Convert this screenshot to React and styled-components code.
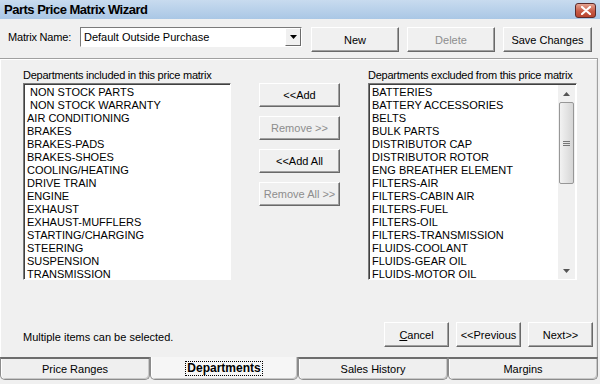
import React from 'react';
import styled, { createGlobalStyle } from 'styled-components';

const GlobalStyle = createGlobalStyle`
  html, body { margin: 0; padding: 0; background: #f0f0f0; }
  body { font-family: "Liberation Sans", Arial, sans-serif; font-size: 11px; color: #000; }
`;

const included = [
  ' NON STOCK PARTS', ' NON STOCK WARRANTY', 'AIR CONDITIONING', 'BRAKES', 'BRAKES-PADS',
  'BRAKES-SHOES', 'COOLING/HEATING', 'DRIVE TRAIN', 'ENGINE', 'EXHAUST', 'EXHAUST-MUFFLERS',
  'STARTING/CHARGING', 'STEERING', 'SUSPENSION', 'TRANSMISSION',
];

const excluded = [
  'BATTERIES', 'BATTERY ACCESSORIES', 'BELTS', 'BULK PARTS', 'DISTRIBUTOR CAP',
  'DISTRIBUTOR ROTOR', 'ENG BREATHER ELEMENT', 'FILTERS-AIR', 'FILTERS-CABIN AIR',
  'FILTERS-FUEL', 'FILTERS-OIL', 'FILTERS-TRANSMISSION', 'FLUIDS-COOLANT',
  'FLUIDS-GEAR OIL', 'FLUIDS-MOTOR OIL',
];

const tabs = ['Price Ranges', 'Departments', 'Sales History', 'Margins'];

const Window = styled.div`
  width: 600px;
  height: 384px;
  display: flex;
  flex-direction: column;
  background: #f0f0f0;
  overflow: hidden;
`;

const TitleBar = styled.div`
  height: 19px;
  flex: none;
  display: flex;
  align-items: center;
  justify-content: space-between;
  padding: 0 4px 0 4px;
  background: linear-gradient(#c8dbef, #aac7e5);
  font-size: 13px;
  letter-spacing: -0.5px;
  font-weight: bold;
`;

const CloseButton = styled.div`
  width: 19px;
  height: 13px;
  margin-top: 1px;
  border: 1px solid #5b2a2a;
  border-radius: 3px;
  background: linear-gradient(#e4a493, #c85a45 55%, #b8452f);
  display: flex;
  align-items: center;
  justify-content: center;
`;

const Toolbar = styled.div`
  height: 39px;
  flex: none;
  display: flex;
  align-items: flex-start;
  padding: 8px 0 0 8px;
  box-sizing: border-box;
`;

const Label = styled.span`
  width: 72px;
  flex: none;
  line-height: 20px;
  letter-spacing: -0.2px;
`;

const Select = styled.div`
  width: 222px;
  height: 20px;
  box-sizing: border-box;
  border: 1px solid;
  border-color: #7a7a7a #fff #fff #7a7a7a;
  background: #fff;
  display: flex;
  align-items: stretch;
  margin-right: 9px;
  span {
    flex: 1;
    padding-left: 3px;
    line-height: 18px;
  }
`;

const Arrow = styled.div`
  width: 16px;
  border: 1px solid;
  border-color: #fff #6b6b6b #6b6b6b #fff;
  background: #f0f0f0;
  display: flex;
  align-items: center;
  justify-content: center;
  box-sizing: border-box;
`;

const Button = styled.div`
  width: ${p => p.w}px;
  height: ${p => p.h || 25}px;
  box-sizing: border-box;
  flex: none;
  border: 1px solid;
  border-color: #fff #696969 #696969 #fff;
  box-shadow: inset -1px -1px 0 #a0a0a0;
  background: #f0f0f0;
  color: ${p => (p.disabled ? '#8d8d8d' : '#000')};
  display: flex;
  align-items: center;
  justify-content: center;
  margin-right: ${p => p.mr || 0}px;
  u { text-decoration: underline; }
`;

const Panel = styled.div`
  flex: 1;
  border-top: 1px solid #a0a0a0;
  border-right: 1px solid #a0a0a0;
  margin-right: 2px;
  box-shadow: inset 1px 1px 0 #fff, inset -1px 0 0 #e3e3e3;
  display: flex;
  flex-direction: column;
  padding: 9px 0 0 23px;
  box-sizing: border-box;
`;

const Lists = styled.div`
  display: flex;
  align-items: flex-start;
`;

const Group = styled.div`
  display: flex;
  flex-direction: column;
  width: ${p => p.w}px;
`;

const Caption = styled.div`
  height: 15px;
  line-height: 15px;
  white-space: nowrap;
  letter-spacing: -0.25px;
`;

const ListBox = styled.div`
  height: 197px;
  box-sizing: border-box;
  border: 1px solid;
  border-color: #7a7a7a #fff #fff #7a7a7a;
  box-shadow: inset 1px 1px 0 #404040;
  background: #fff;
  display: flex;
  padding: 2px 0 0 3px;
`;

const Items = styled.div`
  flex: 1;
`;

const Item = styled.div`
  height: 13px;
  line-height: 13px;
  white-space: pre;
`;

const MidButtons = styled.div`
  display: flex;
  flex-direction: column;
  gap: 9px;
  margin: 15px 28px 0 28px;
`;

const Scroll = styled.div`
  width: 17px;
  margin: -1px 1px 0 0;
  display: flex;
  flex-direction: column;
  align-items: center;
  background: #f0f0f0;
`;

const ScrollArrow = styled.div`
  height: 17px;
  display: flex;
  align-items: center;
  justify-content: center;
`;

const Thumb = styled.div`
  width: 15px;
  height: 82px;
  box-sizing: border-box;
  border: 1px solid #979797;
  border-radius: 2px;
  background: linear-gradient(90deg, #f2f2f2, #e4e4e4 50%, #d6d6d6);
  display: flex;
  align-items: center;
  justify-content: center;
`;

const Track = styled.div`
  flex: 1;
`;

const Footer = styled.div`
  display: flex;
  align-items: center;
  margin-top: 42px;
  padding-right: 4px;
`;

const Note = styled.div`
  flex: 1;
  padding-top: 4px;
`;

const TabBar = styled.div`
  height: 27px;
  flex: none;
  display: flex;
  align-items: flex-start;
  padding-right: 2px;
`;

const Tab = styled.div`
  width: ${p => p.w}px;
  height: 23px;
  box-sizing: border-box;
  border: 1px solid #8c8c8c;
  border-top-color: ${p => (p.active ? 'transparent' : '#6d6d6d')};
  border-top-width: ${p => (p.active ? 0 : 2)}px;
  border-radius: 0 0 5px 5px;
  box-shadow: inset 1px 0 0 #fff, inset -1px -1px 0 #c8c8c8;
  background: ${p => (p.active ? '#f6f6f6' : '#efefef')};
  font-size: ${p => (p.active ? 12 : 11)}px;
  font-weight: ${p => (p.active ? 'bold' : 'normal')};
  display: flex;
  align-items: center;
  justify-content: center;
  span {
    outline: ${p => (p.active ? '1px dotted #000' : 'none')};
    padding: 0 1px;
    line-height: 13px;
  }
`;

function List({ items, scroll }) {
  return (
    <ListBox>
      <Items>
        {items.map(i => <Item key={i}>{i}</Item>)}
      </Items>
      {scroll && (
        <Scroll>
          <ScrollArrow>
            <svg width="7" height="4"><path d="M0 4 L3.5 0 L7 4 Z" fill="#555" /></svg>
          </ScrollArrow>
          <Thumb>
            <svg width="7" height="7">
              <path d="M0 1.5 H7 M0 3.5 H7 M0 5.5 H7" stroke="#777" strokeWidth="1" />
            </svg>
          </Thumb>
          <Track />
          <ScrollArrow>
            <svg width="7" height="4"><path d="M0 0 L3.5 4 L7 0 Z" fill="#555" /></svg>
          </ScrollArrow>
        </Scroll>
      )}
    </ListBox>
  );
}

export default function App() {
  return (
    <Window>
      <GlobalStyle />
      <TitleBar>
        Parts Price Matrix Wizard
        <CloseButton>
          <svg width="10" height="9">
            <path d="M1 1 L9 8 M9 1 L1 8" stroke="#fff" strokeWidth="2.2" strokeLinecap="round" />
          </svg>
        </CloseButton>
      </TitleBar>
      <Toolbar>
        <Label>Matrix Name:</Label>
        <Select>
          <span>Default Outside Purchase</span>
          <Arrow>
            <svg width="7" height="4"><path d="M0 0 L7 0 L3.5 4 Z" fill="#000" /></svg>
          </Arrow>
        </Select>
        <Button w={88} mr={8}>New</Button>
        <Button w={88} mr={8} disabled>Delete</Button>
        <Button w={89}>Save Changes</Button>
      </Toolbar>
      <Panel>
        <Lists>
          <Group w={208}>
            <Caption>Departments included in this price matrix</Caption>
            <List items={included} />
          </Group>
          <MidButtons>
            <Button w={81} h={24}>&lt;&lt;Add</Button>
            <Button w={81} h={24} disabled>Remove &gt;&gt;</Button>
            <Button w={81} h={24}>&lt;&lt;Add All</Button>
            <Button w={81} h={24} disabled>Remove All &gt;&gt;</Button>
          </MidButtons>
          <Group w={209}>
            <Caption>Departments excluded from this price matrix</Caption>
            <List items={excluded} scroll />
          </Group>
        </Lists>
        <Footer>
          <Note>Multiple items can be selected.</Note>
          <Button w={65} mr={7}><span><u>C</u>ancel</span></Button>
          <Button w={65} mr={7}>&lt;&lt;Previous</Button>
          <Button w={65}>Next&gt;&gt;</Button>
        </Footer>
      </Panel>
      <TabBar>
        {tabs.map((t, i) => (
          <Tab key={t} w={i === 1 ? 148 : 150} active={i === 1}>
            <span>{t}</span>
          </Tab>
        ))}
      </TabBar>
    </Window>
  );
}
